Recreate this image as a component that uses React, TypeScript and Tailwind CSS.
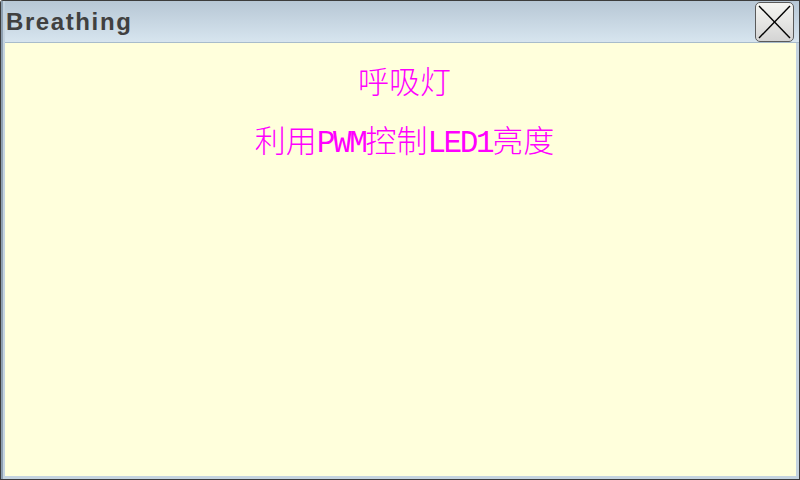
import React from "react";

const Latin = ({ children }: { children: React.ReactNode }) => (
  <span
    className="tracking-[-2.4px] font-normal"
    style={{ fontFamily: '"Liberation Mono", monospace' }}
  >
    {children}
  </span>
);

export default function App() {
  return (
    <div className="w-[800px] h-[480px] bg-[#3c3c3c] p-px rounded-tl-[3px] overflow-hidden">
      <div className="w-full h-full flex flex-col bg-[#c4d3df] border-l-2 border-[#8e9fb0] pl-[2px] pr-[3px] pb-[3px]">
        <div className="h-[42px] shrink-0 flex items-center justify-between bg-gradient-to-b from-[#b7c7d5] to-[#d7e5ef] border-b border-[#a8bccb] -mr-[3px] pr-[3px]">
          <span
            className="pl-[1px] pt-[1px] text-[24px] font-bold text-[#404040] tracking-[1.6px] leading-none"
            style={{ fontFamily: '"Liberation Sans", Arial, sans-serif' }}
          >
            Breathing
          </span>
          <button className="relative w-[39px] h-[40px] mr-[2px] rounded-[5px] border border-[#5a5a5a] bg-gradient-to-b from-[#f4f5f2] via-[#e6e6e4] to-[#d4d4d4] overflow-hidden">
            <svg className="absolute inset-0" width="37" height="38" viewBox="0 0 37 38">
              <line x1="3" y1="3" x2="34" y2="35" stroke="#000" strokeWidth="1.4" />
              <line x1="34" y1="3" x2="3" y2="35" stroke="#000" strokeWidth="1.4" />
            </svg>
          </button>
        </div>
        <div
          className="flex-1 bg-[#ffffdc] flex flex-col items-center pl-[8px] text-[#ff00ff] text-[31px] leading-none font-light"
          style={{ fontFamily: '"Noto Sans CJK SC", sans-serif' }}
        >
          <div className="mt-[21px]">呼吸灯</div>
          <div className="mt-[28px] whitespace-nowrap">
            利用<Latin>PWM</Latin>控制<Latin>LED1</Latin>亮度
          </div>
        </div>
      </div>
    </div>
  );
}
